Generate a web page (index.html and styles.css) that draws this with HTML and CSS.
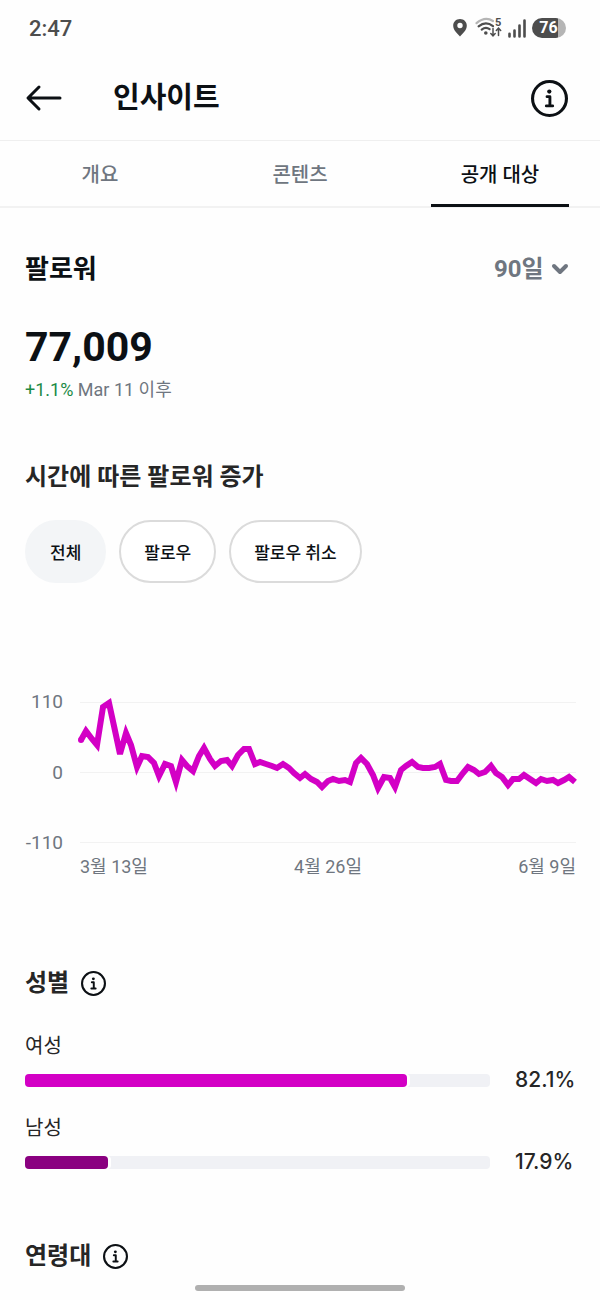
FILE: index.html
```html
<!DOCTYPE html>
<html lang="ko">
<head>
    <meta charset="UTF-8">
    <meta name="viewport" content="width=device-width, initial-scale=1.0">
    <title>인사이트</title>
    <link rel="stylesheet" href="styles.css">
</head>
<body>

    <!-- Shared info icon -->
    <svg class="sprite" aria-hidden="true">
        <symbol id="info" viewBox="0 0 36 36">
            <circle cx="18" cy="18" r="16.5" fill="none" stroke="currentColor" stroke-width="3"/>
            <circle cx="17.8" cy="11.3" r="2.1" fill="currentColor"/>
            <path d="M15.6 16.2h2.8v8.6M14.9 25.2h6.2" fill="none" stroke="currentColor" stroke-width="2.8" stroke-linecap="round" stroke-linejoin="round"/>
        </symbol>
    </svg>

    <div class="status-bar">
        <span class="clock">2:47</span>
        <div class="status-icons">
            <svg width="14" height="18" viewBox="0 0 14 18">
                <path fill="#4d4d4d" fill-rule="evenodd" d="M7 0C3 0 .2 2.9.2 6.7.2 11 4 14 7 17.6 10 14 13.8 11 13.8 6.7 13.8 2.9 11 0 7 0zM7 3.8a2.7 2.7 0 1 1 0 5.4 2.7 2.7 0 0 1 0-5.4z"/>
            </svg>
            <svg class="wifi" width="27" height="20" viewBox="0 0 27 20">
                <g fill="none" stroke-linecap="round">
                    <path d="M1.5 5.2Q10 -2 18 3" stroke="#b5b5b5" stroke-width="2.2"/>
                    <path d="M3.6 8.4Q10.8 2.6 18 8.2" stroke="#4d4d4d" stroke-width="2.2"/>
                    <path d="M6.7 11.6Q10.8 8.4 14.6 11.2" stroke="#4d4d4d" stroke-width="2.2"/>
                    <path d="M18 10.5v7M15.8 15.5l2.2 2.3 2.2-2.3M23.5 17.5v-7M21.3 12.5l2.2-2.3 2.2 2.3" stroke="#4d4d4d" stroke-width="1.5"/>
                </g>
                <circle cx="10.8" cy="15" r="1.8" fill="#4d4d4d"/>
                <text class="band" x="20" y="8">5</text>
            </svg>
            <svg width="18" height="19" viewBox="0 0 18 19">
                <path d="M1.5 14.8v2.7M6.5 11.5v6M11.5 6.5v11M16.5 1.5v16" fill="none" stroke="#4d4d4d" stroke-width="2.6" stroke-linecap="round"/>
            </svg>
            <span class="battery">76</span>
        </div>
    </div>

    <header>
        <button type="button" class="icon-button" aria-label="뒤로">
            <svg width="36" height="26" viewBox="0 0 36 26">
                <path d="M34 13H2.5M13 2L2 13l11 11" fill="none" stroke="currentColor" stroke-width="3" stroke-linecap="round" stroke-linejoin="round"/>
            </svg>
        </button>
        <h1>인사이트</h1>
        <button type="button" class="icon-button" aria-label="정보">
            <svg width="37" height="37"><use href="#info"/></svg>
        </button>
    </header>

    <nav>
        <a href="#overview">개요</a>
        <a href="#content">콘텐츠</a>
        <a href="#audience" class="active">공개 대상</a>
    </nav>

    <main>
        <section>
            <div class="section-head">
                <h2>팔로워</h2>
                <div class="period">
                    <select id="period" aria-label="기간">
                        <option>90일</option>
                        <option>30일</option>
                        <option>14일</option>
                    </select>
                    <svg width="16" height="10" viewBox="0 0 16 10">
                        <path d="M2 2l6 6 6-6" fill="none" stroke="currentColor" stroke-width="4" stroke-linecap="round" stroke-linejoin="round"/>
                    </svg>
                </div>
            </div>
            <p class="total">77,009</p>
            <p class="change"><span class="up">+1.1%</span> Mar 11 이후</p>
        </section>

        <section class="growth">
            <h3>시간에 따른 팔로워 증가</h3>
            <div class="filters">
                <button type="button" class="filter selected">전체</button>
                <button type="button" class="filter">팔로우</button>
                <button type="button" class="filter">팔로우 취소</button>
            </div>

            <div class="chart">
                <div class="y-axis">
                    <span>110</span>
                    <span>0</span>
                    <span>-110</span>
                </div>
                <div class="plot">
                    <!-- One point per day, zero line at y=70 -->
                    <svg viewBox="0 0 496 141">
                        <path class="grid-line" d="M0 .5H496M0 70.5H496M0 140.5H496"/>
                        <circle cx="1" cy="38" r="3" fill="#d300c5"/>
                        <polyline class="line" points="1,38 6,29 12,37 17,43 23,5 29,1 34,24 40,52 46,31 51,43 57,65 62,54 68,55 74,61 79,74 85,62 91,64 96,80 102,58 107,64 113,69 119,54 124,46 130,57 135,64 141,59 147,58 152,64 158,53 164,47 169,47 175,62 180,60 186,62 192,64 197,66 203,62 209,66 214,71 220,76 225,72 231,77 237,80 242,85 248,79 253,77 259,79 265,78 270,80 276,61 281,56 287,62 293,73 298,86 304,75 310,76 315,85 321,68 326,64 332,60 338,65 343,66 349,66 355,65 360,62 366,78 371,79 377,79 383,71 388,65 394,68 399,72 405,70 411,64 416,71 422,75 428,83 433,77 439,77 444,73 450,77 456,81 461,77 467,79 473,78 478,81 484,78 489,75 495,80"/>
                    </svg>
                </div>
                <div class="x-axis">
                    <span>3월 13일</span>
                    <span>4월 26일</span>
                    <span>6월 9일</span>
                </div>
            </div>
        </section>

        <section class="gender">
            <h3>성별 <svg width="25" height="25"><use href="#info"/></svg></h3>
            <div class="stat">
                <span class="stat-label">여성</span>
                <div class="stat-row">
                    <div class="bar"><div class="fill" style="width: 82.1%"></div></div>
                    <span class="value">82.1%</span>
                </div>
            </div>
            <div class="stat">
                <span class="stat-label">남성</span>
                <div class="stat-row">
                    <div class="bar"><div class="fill dark" style="width: 17.9%"></div></div>
                    <span class="value">17.9%</span>
                </div>
            </div>
        </section>

        <section class="age">
            <h3>연령대 <svg width="25" height="25"><use href="#info"/></svg></h3>
        </section>
    </main>

    <div class="home-indicator"></div>

</body>
</html>
```

FILE: styles.css
```css
* {
    box-sizing: border-box;
}

body {
    margin: 0;
    background-color: #fefefe;
    color: #0c1014;
    font-family: Roboto, 'Noto Sans CJK KR', sans-serif;
}

h1, h2, h3, p {
    margin: 0;
}

button {
    font-family: inherit;
    cursor: pointer;
}

svg {
    display: block;
    overflow: visible;
}

.sprite {
    position: absolute;
    width: 0;
    height: 0;
}

/* Status bar */
.status-bar {
    display: flex;
    justify-content: space-between;
    align-items: center;
    height: 56px;
    padding: 0 34px 0 29px;
}

.clock {
    font-size: 22px;
    font-weight: 500;
    color: #4d4d4d;
}

.status-icons {
    display: flex;
    align-items: center;
    gap: 6px;
}

.wifi {
    margin-left: 2px;
}

.band {
    font-size: 11px;
    font-weight: 700;
    fill: #4d4d4d;
}

.battery {
    width: 34px;
    height: 20px;
    padding-right: 1px;
    border-radius: 10px;
    background: linear-gradient(to right, #4d4d4d 76%, #b5b5b5 76%);
    color: #fff;
    font-size: 16px;
    font-weight: 700;
    line-height: 20px;
    text-align: center;
}

/* Header */
header {
    display: flex;
    align-items: center;
    height: 84px;
    padding: 0 32px 0 26px;
}

h1 {
    flex: 1;
    margin-left: 51px;
    font-size: 29px;
    font-weight: 700;
    line-height: 40px;
}

.icon-button {
    padding: 0;
    border: none;
    background: none;
    color: #0c1014;
}

/* Tabs */
nav {
    display: flex;
    height: 68px;
    border-top: 1px solid #efefef;
    border-bottom: 2px solid #f2f2f2;
}

nav a {
    flex: 1;
    height: 66px;
    margin: 0 31px;
    border-bottom: 3px solid transparent;
    color: #6f7680;
    font-size: 20px;
    font-weight: 500;
    line-height: 68px;
    text-align: center;
    text-decoration: none;
    white-space: nowrap;
}

nav a.active {
    border-bottom-color: #0c1014;
    color: #0c1014;
}

main {
    padding: 41px 24px 28px 25px;
}

/* Followers */
.section-head {
    display: flex;
    justify-content: space-between;
    align-items: center;
    height: 40px;
    padding-right: 8px;
}

h2 {
    font-size: 26px;
    line-height: 40px;
}

.period {
    position: relative;
    color: #6f7680;
}

.period select {
    appearance: none;
    padding: 0 24px 0 0;
    border: none;
    background: none;
    color: inherit;
    font-family: inherit;
    font-size: 24px;
    font-weight: 700;
    line-height: 40px;
}

.period svg {
    position: absolute;
    top: 15px;
    right: 0;
    pointer-events: none;
}

.total {
    margin-top: 34px;
    font-size: 41px;
    font-weight: 700;
    line-height: 48px;
}

.change {
    margin-top: 7px;
    color: #6f7680;
    font-size: 18px;
    line-height: 24px;
}

.up {
    color: #1b8a45;
}

h3 {
    display: flex;
    align-items: center;
    gap: 12px;
    color: #262626;
    font-size: 24px;
    line-height: 32px;
}

h3 svg {
    color: #0c1014;
}

/* Follower growth */
.growth {
    margin-top: 59px;
}

.filters {
    display: flex;
    gap: 13px;
    margin-top: 27px;
}

.filter {
    height: 63px;
    padding: 0 23px;
    border: 2px solid #dbdbdb;
    border-radius: 32px;
    background-color: #fff;
    color: #0c1014;
    font-size: 17px;
    font-weight: 500;
}

.filter.selected {
    border-color: #f3f5f7;
    background-color: #f3f5f7;
}

.chart {
    display: grid;
    grid-template-columns: 38px 1fr;
    column-gap: 17px;
    row-gap: 2px;
    margin-top: 109px;
    color: #6f7680;
    font-size: 18px;
}

.y-axis {
    display: flex;
    flex-direction: column;
    justify-content: space-between;
    font-size: 19px;
    line-height: 20px;
    text-align: right;
}

.plot {
    padding: 10px 0;
}

.grid-line {
    stroke: #f2f2f2;
}

.line {
    fill: none;
    stroke: #d300c5;
    stroke-width: 6;
    stroke-miterlimit: 4;
}

.x-axis {
    grid-column: 2;
    display: grid;
    grid-template-columns: repeat(3, 1fr);
    line-height: 24px;
    text-align: center;
}

.x-axis span:first-child {
    text-align: left;
}

.x-axis span:last-child {
    text-align: right;
}

/* Gender */
.gender {
    margin-top: 88px;
}

.stat {
    margin-top: 21px;
}

h3 + .stat {
    margin-top: 33px;
}

.stat-label {
    display: block;
    color: #262626;
    font-size: 20px;
    line-height: 28px;
}

.stat-row {
    display: flex;
    align-items: center;
    gap: 25px;
    margin-top: 7px;
}

.bar {
    flex: 1;
    height: 13px;
    border-radius: 4px;
    background-color: #f0f1f5;
}

.fill {
    height: 13px;
    border-radius: 4px;
    background-color: #d300c5;
    box-shadow: 3px 0 0 #fff;
}

.fill.dark {
    background-color: #8a0080;
}

.value {
    width: 61px;
    color: #262626;
    font-family: Inter, sans-serif;
    font-size: 21px;
    font-weight: 500;
    line-height: 26px;
}

/* Age */
.age {
    margin-top: 65px;
}

.home-indicator {
    position: fixed;
    bottom: 9px;
    left: 50%;
    width: 35%;
    height: 6px;
    border-radius: 3px;
    background-color: #b0b0b0;
    transform: translateX(-50%);
}
```
